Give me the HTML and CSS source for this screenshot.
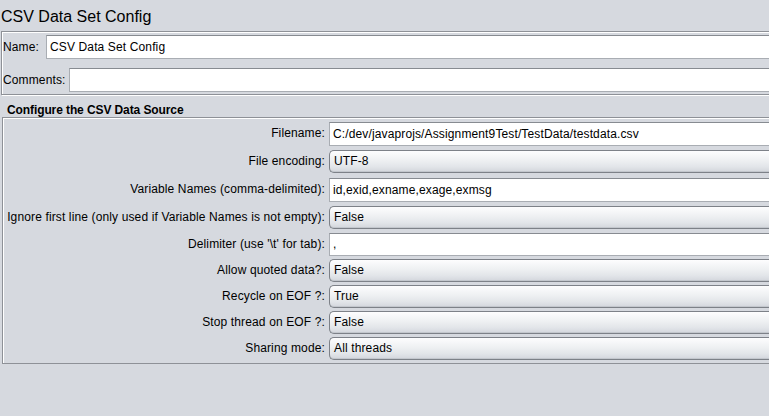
FILE: index.html
```html
<!DOCTYPE html>
<html>
<head>
<meta charset="utf-8">
<title>CSV Data Set Config</title>
<link rel="stylesheet" href="styles.css">
</head>
<body>
<div class="page">
  <div class="title">CSV Data Set Config</div>
  <div class="panel top-panel">
    <div class="row">
      <span class="lbl lbl-name">Name:</span>
      <div class="textfield">CSV Data Set Config</div>
    </div>
    <div class="row row-comments">
      <span class="lbl lbl-comments">Comments:</span>
      <div class="textfield"></div>
    </div>
  </div>
  <div class="section">
    <div class="section-title">Configure the CSV Data Source</div>
    <div class="panel config-panel">
      <span class="flabel">Filename:</span>
      <div class="textfield tf-tall">C:/dev/javaprojs/Assignment9Test/TestData/testdata.csv</div>
      <span class="flabel">File encoding:</span>
      <div class="combo">UTF-8</div>
      <span class="flabel">Variable Names (comma-delimited):</span>
      <div class="textfield tf-tall">id,exid,exname,exage,exmsg</div>
      <span class="flabel">Ignore first line (only used if Variable Names is not empty):</span>
      <div class="combo">False</div>
      <span class="flabel">Delimiter (use '\t' for tab):</span>
      <div class="textfield">,</div>
      <span class="flabel">Allow quoted data?:</span>
      <div class="combo">False</div>
      <span class="flabel">Recycle on EOF ?:</span>
      <div class="combo">True</div>
      <span class="flabel">Stop thread on EOF ?:</span>
      <div class="combo">False</div>
      <span class="flabel">Sharing mode:</span>
      <div class="combo">All threads</div>
    </div>
  </div>
</div>
</body>
</html>
```
FILE: styles.css
```css
html, body {
  margin: 0;
  padding: 0;
  overflow: hidden;
  background: #d6d9df;
}
body {
  font-family: "Liberation Sans", Arial, sans-serif;
  font-size: 12px;
  letter-spacing: 0.13px;
  color: #000;
}
.page {
  width: 820px;
  padding-left: 1px;
}
.title {
  font-size: 16px;
  line-height: 18px;
  height: 31px;
  box-sizing: border-box;
  padding-top: 8px;
  letter-spacing: 0;
  color: #000;
}
.panel {
  border: 1px solid #8e9197;
  box-shadow: inset 1px 1px 0 #fff, 1px 1px 0 #fff;
  box-sizing: border-box;
}
.top-panel {
  height: 64px;
  padding: 3px 0 2px 1px;
}
.row {
  display: flex;
  align-items: center;
  height: 24px;
}
.row-comments {
  margin-top: 9px;
}
.lbl {
  flex: none;
  line-height: 24px;
}
.lbl-name { width: 43px; }
.lbl-comments { width: 66px; }
.textfield {
  flex: 1;
  height: 24px;
  box-sizing: border-box;
  background: #fff;
  border: 1px solid #a9adb3;
  border-top-color: #878b91;
  padding-left: 3px;
  line-height: 22px;
  white-space: nowrap;
  overflow: hidden;
}
.section {
  margin-left: 1px;
}
.section-title {
  margin-top: 8px;
  line-height: 14px;
  padding-left: 5px;
  font-weight: bold;
  letter-spacing: -0.1px;
}
.config-panel {
  height: 247px;
  padding: 4px 0 3px 0;
  display: grid;
  grid-template-columns: 322px 1fr;
  grid-template-rows: 28px 28px 28px 27px 26px 26px 26px 26px 23px;
  column-gap: 4px;
  align-items: start;
}
.flabel {
  text-align: right;
  line-height: 23px;
  white-space: nowrap;
}
.config-panel .textfield {
  height: 23px;
  line-height: 21px;
}
.config-panel .tf-tall {
  height: 24px;
  line-height: 22px;
}
.combo {
  height: 23px;
  box-sizing: border-box;
  border: 1px solid #7d8188;
  border-right: none;
  border-radius: 5px 0 0 5px;
  background: linear-gradient(#fdfdfe 0%, #eef0f2 45%, #e2e5e9 75%, #d3d6dc 100%);
  box-shadow: inset 0 -1px 0 #c3c7cd;
  padding-left: 4px;
  line-height: 21px;
  white-space: nowrap;
}
```
